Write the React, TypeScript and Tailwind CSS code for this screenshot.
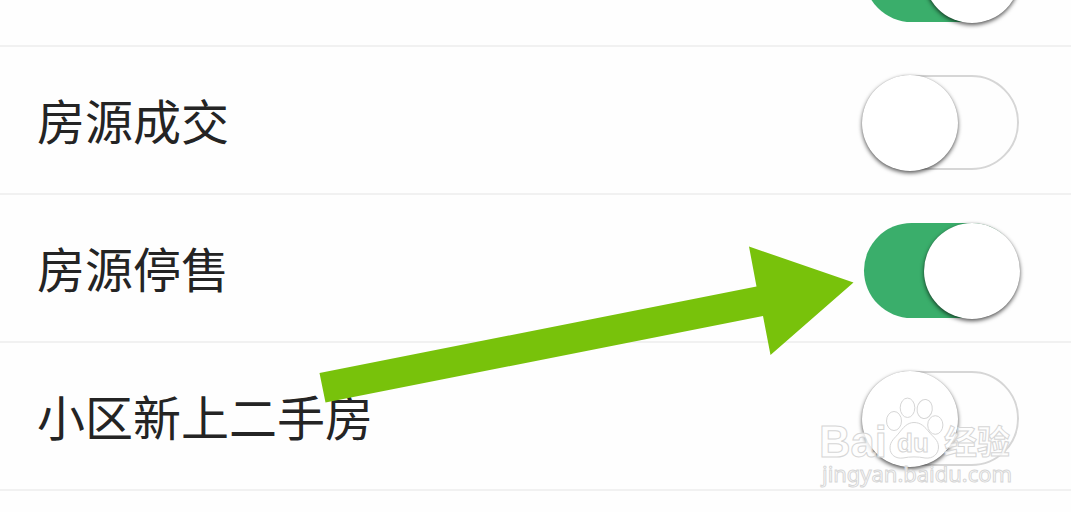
import { useState } from "react";
import clsx from "clsx";

interface ToggleProps {
  checked: boolean;
  onChange: () => void;
}

interface Setting {
  id: string;
  label: string;
  enabled: boolean;
}

const initialSettings: Setting[] = [
  { id: "previous", label: "", enabled: true },
  { id: "sold", label: "房源成交", enabled: false },
  { id: "stopped", label: "房源停售", enabled: true },
  { id: "new", label: "小区新上二手房", enabled: false },
];

function Toggle({ checked, onChange }: ToggleProps) {
  return (
    <button
      type="button"
      role="switch"
      aria-checked={checked}
      onClick={onChange}
      className={clsx(
        "flex h-[95px] w-[155px] shrink-0 items-center rounded-full",
        checked ? "justify-end bg-[#3aae6b]" : "justify-start border-2 border-[#d6d6d6] bg-[#fefefe]"
      )}
    >
      <span
        className={clsx(
          "size-[96px] shrink-0 rounded-full bg-white shadow-[0_2px_4px_rgba(0,0,0,0.65),0_0_1px_rgba(0,0,0,0.2)]",
          checked ? "-mr-px" : "-ml-1"
        )}
      />
    </button>
  );
}

function Arrow() {
  return (
    <svg className="pointer-events-none absolute left-[319px] top-[246px]" width="535" height="158" viewBox="319 246 535 158">
      <path d="M319.5 373 756.5 286.5 749 246.5 853.5 282.5 770.5 355 763 316 325.5 402.5Z" fill="#78c20b" />
    </svg>
  );
}

function Watermark() {
  return (
    <svg
      className="pointer-events-none absolute left-[816px] top-[392px]"
      width="204"
      height="100"
      viewBox="816 392 204 100"
      fill="#fff"
      fillOpacity="0.8"
      stroke="#d6d6d6"
      strokeWidth="1"
    >
      <text
        x="819"
        y="457"
        fontSize="44"
        fontWeight="700"
        textLength="68"
        lengthAdjust="spacingAndGlyphs"
        fontFamily="Liberation Sans, sans-serif"
      >
        Bai
      </text>
      <ellipse cx="894" cy="421" rx="7.5" ry="9.5" />
      <ellipse cx="907.5" cy="407.8" rx="7.3" ry="9.7" />
      <ellipse cx="924.7" cy="409" rx="7.6" ry="9.5" transform="rotate(8 924.7 409)" />
      <ellipse cx="935.3" cy="425" rx="7.6" ry="9.3" />
      <path d="M914 422.5C907 422.5 903 428 899 433C895 438 890 441 890 448C890 455 896 459 903 458C910 456.5 918 456.5 925 458C933 459 938.5 454 938.5 447C938.5 440 933 437 929 432C925 427 921 422.5 914 422.5Z" />
      <text
        x="897"
        y="452"
        fontSize="26"
        fontWeight="700"
        textLength="32"
        fontFamily="Liberation Sans, sans-serif"
      >
        du
      </text>
      <text x="944" y="454" fontSize="33" fontWeight="700" textLength="66" fontFamily="Noto Sans CJK SC, sans-serif">
        经验
      </text>
      <text x="822" y="482" fontSize="22" textLength="190" fontFamily="Noto Sans, sans-serif">
        jingyan.baidu.com
      </text>
    </svg>
  );
}

export default function App() {
  const [settings, setSettings] = useState(initialSettings);

  const toggleSetting = (id: string) => {
    setSettings((prev) => prev.map((s) => (s.id === id ? { ...s, enabled: !s.enabled } : s)));
  };

  return (
    <main className="relative h-[512px] w-[1071px] overflow-hidden bg-[#fefefe] font-['Noto_Sans_CJK_SC',sans-serif]">
      <div className="-mt-[101px]">
        {settings.map((setting) => (
          <div
            key={setting.id}
            className="flex h-[148px] items-center justify-between border-b-2 border-[#f1f1f1] pl-[37px] pr-[52px] pt-[5px]"
          >
            <span className="-mt-[7px] text-[48px] leading-[70px] text-[#242424]">{setting.label}</span>
            <Toggle checked={setting.enabled} onChange={() => toggleSetting(setting.id)} />
          </div>
        ))}
      </div>
      <Arrow />
      <Watermark />
    </main>
  );
}
